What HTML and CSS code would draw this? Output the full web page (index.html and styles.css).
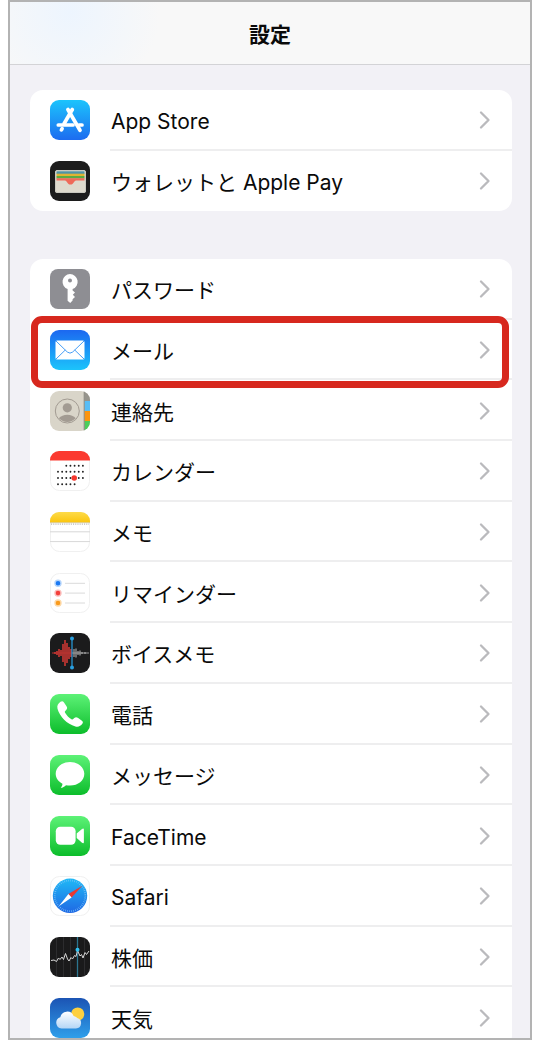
FILE: index.html
```html
<!DOCTYPE html>
<html lang="ja">

<head>
    <meta charset="UTF-8">
    <meta name="viewport" content="width=device-width, initial-scale=1.0">
    <title>設定</title>
    <link rel="stylesheet" href="styles.css">
</head>

<body>
    <!-- Shared gradients and the chevron -->
    <svg class="defs" width="0" height="0" aria-hidden="true">
        <defs>
            <linearGradient id="g-store" x2="0" y2="1">
                <stop offset="0" stop-color="#1cc4fc" />
                <stop offset="1" stop-color="#1d6cf0" />
            </linearGradient>
            <linearGradient id="g-mail" x2="0" y2="1">
                <stop offset="0" stop-color="#1c68f0" />
                <stop offset="1" stop-color="#1cc4fb" />
            </linearGradient>
            <linearGradient id="g-green" x2="0" y2="1">
                <stop offset="0" stop-color="#5df277" />
                <stop offset="1" stop-color="#0cbd2b" />
            </linearGradient>
            <linearGradient id="g-notes" x2="0" y2="1">
                <stop offset="0" stop-color="#fddb4a" />
                <stop offset="1" stop-color="#fbc50d" />
            </linearGradient>
            <linearGradient id="g-safari" x2="0" y2="1">
                <stop offset="0" stop-color="#1fb9f6" />
                <stop offset="1" stop-color="#1f68e4" />
            </linearGradient>
            <linearGradient id="g-weather" x2="0" y2="1">
                <stop offset="0" stop-color="#1b54b4" />
                <stop offset="1" stop-color="#2f9fea" />
            </linearGradient>
            <linearGradient id="g-cloud" x2="0" y2="1">
                <stop offset="0" stop-color="#ffffff" />
                <stop offset="1" stop-color="#b5d6f6" />
            </linearGradient>
            <clipPath id="tile">
                <rect width="40" height="40" rx="9" />
            </clipPath>
            <symbol id="chevron" viewBox="0 0 12 20">
                <path d="M2 2.500 L9.500 10 L2 17.500" fill="none" stroke="#bababd" stroke-width="2.300" stroke-linecap="round" stroke-linejoin="round" />
            </symbol>
        </defs>
    </svg>

    <div class="phone">
        <header class="navbar">
            <h1>設定</h1>
        </header>

        <main class="settings">
            <ul class="group">
                <li>
                    <a class="row" href="#app-store">
                        <svg class="icon" viewBox="0 0 40 40">
                            <rect width="40" height="40" rx="9" fill="url(#g-store)" />
                            <g fill="none" stroke="#fff" stroke-width="3.700" stroke-linecap="round">
                                <path d="M22.300 9.500 L14.200 23.500" />
                                <path d="M12.100 28.700 L11.400 29.900" />
                                <path d="M17.900 9.500 L30 30.300" />
                                <path d="M8.300 25 H23 M29 25 H32" />
                            </g>
                        </svg>
                        <span class="row-body">App Store<svg class="chevron"><use href="#chevron" /></svg></span>
                    </a>
                </li>
                <li>
                    <a class="row" href="#wallet">
                        <svg class="icon" viewBox="0 0 40 40">
                            <rect width="40" height="40" rx="9" fill="#1c1c1c" />
                            <rect x="5" y="9" width="31" height="23" rx="2.500" fill="#dedacd" />
                            <path d="M6.500 10.300 H34.500 V13 H6.500z" fill="#4d94a6" />
                            <path d="M6.500 12.700 H34.500 V15.200 H6.500z" fill="#e0b332" />
                            <path d="M6.500 15 H34.500 V17.500 H6.500z" fill="#5bab42" />
                            <path d="M6.500 17.300 H34.500 V19.500 H26 C24 19.500 23.800 23.600 20.500 23.600 S17 19.500 15 19.500 H6.500z" fill="#ef6a59" />
                            <rect x="5.500" y="9.500" width="30" height="22" rx="2" fill="none" stroke="#c9c8bf" />
                        </svg>
                        <span class="row-body">ウォレットと Apple Pay<svg class="chevron"><use href="#chevron" /></svg></span>
                    </a>
                </li>
            </ul>

            <ul class="group group-apps">
                <li>
                    <a class="row" href="#passwords">
                        <svg class="icon" viewBox="0 0 40 40">
                            <rect width="40" height="40" rx="8" fill="#8e8e93" />
                            <path fill="#fff" fill-rule="evenodd" d="M20 5 a7.800 7.800 0 0 1 2.600 15.100 V21.500 L25 23.600 L22.800 25.800 L25 28 L22.600 30.200 V31.500 L20.200 34 L17.600 31.700 V20.100 A7.800 7.800 0 0 1 20 5z M20 9.400 a2 2 0 1 0 0 4 a2 2 0 1 0 0 -4z" />
                        </svg>
                        <span class="row-body">パスワード<svg class="chevron"><use href="#chevron" /></svg></span>
                    </a>
                </li>
                <li class="highlighted">
                    <a class="row" href="#mail">
                        <svg class="icon" viewBox="0 0 40 40">
                            <rect width="40" height="40" rx="9" fill="url(#g-mail)" />
                            <rect x="5.500" y="10.500" width="29" height="19" rx="1.500" fill="#fff" />
                            <g fill="none" stroke="#3293f5" stroke-width="0.900">
                                <path d="M6 11 L17.300 22 Q20 24.300 22.700 22 L34 11" />
                                <path d="M6 29 L15.300 20 M34 29 L24.700 20" />
                            </g>
                        </svg>
                        <span class="row-body">メール<svg class="chevron"><use href="#chevron" /></svg></span>
                    </a>
                </li>
                <li>
                    <a class="row" href="#contacts">
                        <svg class="icon" viewBox="0 0 40 40">
                            <g clip-path="url(#tile)">
                                <rect width="40" height="40" fill="#d9d5c9" />
                                <rect x="34.500" width="6" height="10" fill="#96948c" />
                                <rect x="34.500" y="10" width="6" height="10" fill="#58bdf5" />
                                <rect x="34.500" y="20" width="6" height="10" fill="#fb950f" />
                                <rect x="34.500" y="30" width="6" height="10" fill="#4ccd5c" />
                                <path d="M34.200 0 V40" stroke="#77756e" stroke-width="0.800" />
                            </g>
                            <circle cx="17.300" cy="20" r="12" fill="none" stroke="#a29b92" />
                            <circle cx="17.300" cy="16.800" r="4.600" fill="#a29b92" />
                            <path d="M8.800 27.300 Q12 23.700 17.300 23.700 T25.800 27.300 Q22 31 17.300 31 T8.800 27.300z" fill="#a29b92" />
                        </svg>
                        <span class="row-body">連絡先<svg class="chevron"><use href="#chevron" /></svg></span>
                    </a>
                </li>
                <li>
                    <a class="row" href="#calendar">
                        <svg class="icon" viewBox="0 0 40 40">
                            <rect x="0.500" y="0.500" width="39" height="39" rx="9" fill="#fff" stroke="#f0f0f0" />
                            <path d="M0 9.500 V9 A9 9 0 0 1 9 0 H31 A9 9 0 0 1 40 9 V9.500z" fill="#fb3a30" />
                            <g stroke="#222" stroke-width="1.900" stroke-linecap="round" stroke-dasharray="0 4.150">
                                <path d="M16.300 14.700 H33" />
                                <path d="M8 20.800 H33" />
                                <path d="M8 27 H33" />
                                <path d="M8 33.200 H25" />
                            </g>
                            <circle cx="24.200" cy="27" r="2.800" fill="#f5362c" />
                        </svg>
                        <span class="row-body">カレンダー<svg class="chevron"><use href="#chevron" /></svg></span>
                    </a>
                </li>
                <li>
                    <a class="row" href="#notes">
                        <svg class="icon" viewBox="0 0 40 40">
                            <rect x="0.500" y="0.500" width="39" height="39" rx="9" fill="#fff" stroke="#f0f0f0" />
                            <path d="M0 10.500 V9 A9 9 0 0 1 9 0 H31 A9 9 0 0 1 40 9 V10.500z" fill="url(#g-notes)" />
                            <path d="M0 10.700 H40" stroke="#c9b884" stroke-width="0.600" />
                            <path d="M1 12.200 H39" stroke="#b8b8b8" stroke-width="1.200" stroke-dasharray="1.100 1.100" />
                            <path d="M0 19.800 H40 M0 29.600 H40" stroke="#d8d8d8" />
                        </svg>
                        <span class="row-body">メモ<svg class="chevron"><use href="#chevron" /></svg></span>
                    </a>
                </li>
                <li>
                    <a class="row" href="#reminders">
                        <svg class="icon" viewBox="0 0 40 40">
                            <rect x="0.500" y="0.500" width="39" height="39" rx="9" fill="#fff" stroke="#f0f0f0" />
                            <circle cx="8" cy="10.300" r="3" fill="#1a78f2" stroke="#b4d4fb" stroke-width="1.400" />
                            <circle cx="8" cy="20.100" r="3" fill="#f3403a" stroke="#fbbcba" stroke-width="1.400" />
                            <circle cx="8" cy="30" r="3" fill="#f99a1c" stroke="#fdd9a8" stroke-width="1.400" />
                            <path d="M15 10.300 H35 M15 20.100 H35 M15 30 H35" stroke="#dadada" />
                        </svg>
                        <span class="row-body">リマインダー<svg class="chevron"><use href="#chevron" /></svg></span>
                    </a>
                </li>
                <li>
                    <a class="row" href="#voice-memos">
                        <svg class="icon" viewBox="0 0 40 40">
                            <rect width="40" height="40" rx="9" fill="#1b1b1c" />
                            <path d="M2 20 H22" stroke="#b5302e" />
                            <path d="M5 19 V21 M7 18 V22 M9 16 V24 M11 17 V23 M13 11 V29 M15 7 V33 M17 10 V30 M19 14 V26 M21 16 V24" stroke="#c03632" stroke-width="1.700" />
                            <path d="M22 20 H39" stroke="#999" />
                            <path d="M24 16 V24 M26 15.500 V24.500 M28 18 V22 M30 17.500 V22.500 M32 19 V21 M35 19 V21" stroke="#a5a5a5" stroke-width="1.200" />
                            <path d="M22 6 V34" stroke="#299fdf" stroke-width="1.200" />
                            <circle cx="22" cy="5.500" r="2" fill="#299fdf" />
                            <circle cx="22" cy="34.500" r="2" fill="#299fdf" />
                        </svg>
                        <span class="row-body">ボイスメモ<svg class="chevron"><use href="#chevron" /></svg></span>
                    </a>
                </li>
                <li>
                    <a class="row" href="#phone">
                        <svg class="icon" viewBox="0 0 40 40">
                            <rect width="40" height="40" rx="9" fill="url(#g-green)" />
                            <path fill="#fff" d="M10.500 7.800 C12 6.700 13 7.100 14 8.500 L16.500 12.200 C17.500 13.800 17.300 14.700 16.200 15.900 L15.200 17 C14.700 17.600 14.800 18.100 15.100 18.700 C16.500 21.200 19 23.700 21.500 25.200 C22.200 25.600 22.700 25.600 23.200 25.100 L24.300 24.100 C25.500 23 26.400 22.900 27.800 23.800 L31.600 26.400 C33 27.400 33.300 28.400 32.300 29.800 C30.700 32.100 28.400 33.200 25.400 32.400 C17 30 9.800 22.600 7.500 14.700 C6.800 11.800 8 9.500 10.500 7.800z" />
                        </svg>
                        <span class="row-body">電話<svg class="chevron"><use href="#chevron" /></svg></span>
                    </a>
                </li>
                <li>
                    <a class="row" href="#messages">
                        <svg class="icon" viewBox="0 0 40 40">
                            <rect width="40" height="40" rx="9" fill="url(#g-green)" />
                            <path fill="#fff" d="M20 7 C28.200 7 34.300 12.200 34.300 18.800 S28.200 30.600 20 30.600 C18.600 30.600 17.300 30.400 16 30.200 C14.500 31.800 12.700 32.700 10.700 32.800 C12 31.400 12.500 30 12.400 28.700 C8.300 26.700 5.700 23 5.700 18.800 C5.700 12.200 11.800 7 20 7z" />
                        </svg>
                        <span class="row-body">メッセージ<svg class="chevron"><use href="#chevron" /></svg></span>
                    </a>
                </li>
                <li>
                    <a class="row" href="#facetime">
                        <svg class="icon" viewBox="0 0 40 40">
                            <rect width="40" height="40" rx="9" fill="url(#g-green)" />
                            <rect x="5.800" y="10.800" width="19.800" height="18" rx="4.500" fill="#fff" />
                            <path fill="#fff" d="M26.700 17.600 L32 12.900 Q33.900 11.600 33.900 13.700 V25.900 Q33.900 28 32 26.700 L26.700 22z" />
                        </svg>
                        <span class="row-body">FaceTime<svg class="chevron"><use href="#chevron" /></svg></span>
                    </a>
                </li>
                <li>
                    <a class="row" href="#safari">
                        <svg class="icon" viewBox="0 0 40 40">
                            <rect x="0.500" y="0.500" width="39" height="39" rx="9" fill="#fff" stroke="#f0f0f0" />
                            <circle cx="20" cy="19.800" r="17.200" fill="url(#g-safari)" />
                            <circle cx="20" cy="19.800" r="15.300" fill="none" stroke="#7fc4f8" stroke-width="1.800" stroke-dasharray="0.600 1.400" />
                            <path d="M32.300 9.800 L18.400 18 L21.600 21.600z" fill="#e8382f" />
                            <path d="M8.800 30.300 L18.400 18 L21.600 21.600z" fill="#fff" />
                        </svg>
                        <span class="row-body">Safari<svg class="chevron"><use href="#chevron" /></svg></span>
                    </a>
                </li>
                <li>
                    <a class="row" href="#stocks">
                        <svg class="icon" viewBox="0 0 40 40">
                            <rect width="40" height="40" rx="9" fill="#1a1a1b" />
                            <path d="M6.500 1 V39 M13.500 0 V40 M20.500 0 V40 M34.500 1 V39" stroke="#2c2c2e" />
                            <path d="M27.500 0 V40" stroke="#2c7590" stroke-width="1.300" />
                            <path d="M1 23.500 L4 23 L6.500 24.500 L8.500 21 L10 22.500 L12 20 L13.500 22.500 L15.500 16.500 L17.500 22 L19 24 L21 20.500 L22.500 22 L24.500 18.500 L26 19.500 L27.500 13.500 L30 19 L31.500 17.500 L33 21 L35 15.500 L36.500 17.500 L39 14" fill="none" stroke="#d8d8d8" />
                            <circle cx="27.500" cy="12.800" r="2" fill="#2fc0f0" />
                        </svg>
                        <span class="row-body">株価<svg class="chevron"><use href="#chevron" /></svg></span>
                    </a>
                </li>
                <li>
                    <a class="row" href="#weather">
                        <svg class="icon" viewBox="0 0 40 40">
                            <rect width="40" height="40" rx="9" fill="url(#g-weather)" />
                            <circle cx="27.700" cy="16" r="6.600" fill="#fdd03f" />
                            <path d="M11.500 30.500 A5.800 5.800 0 0 1 10.300 19.200 A7 7 0 0 1 23.600 17.900 A5.500 5.500 0 0 1 27.200 20.100 A5.300 5.300 0 0 1 26 30.500z" fill="url(#g-cloud)" />
                        </svg>
                        <span class="row-body">天気<svg class="chevron"><use href="#chevron" /></svg></span>
                    </a>
                </li>
            </ul>
        </main>
    </div>
</body>

</html>
```
FILE: styles.css
```css
body {
    margin: 0;
    padding: 0 8px;
    background: #fff;
    color: #0a0a0a;
    font-family: Inter, "Noto Sans CJK JP", sans-serif;
    font-size: 21px;
    line-height: 28px;
}

.defs {
    position: absolute;
}

/* Phone screen: the list runs on below the bottom edge */
.phone {
    height: 100vh;
    box-sizing: border-box;
    overflow: hidden;
    border: 2px solid #b3b3b3;
    background: #f2f1f6;
}

.navbar {
    padding: 19px 0 15px;
    border-bottom: 1px solid #d3d3d6;
    background: radial-gradient(circle at 60px 10px, #edf5fe, #f8f8f8 90px);
}

h1 {
    margin: 0;
    font-size: 21px;
    line-height: 28px;
    font-weight: 700;
    text-align: center;
}

.settings {
    padding: 25px 18px 0 20px;
}

.group {
    display: grid;
    grid-auto-rows: 1fr;
    min-height: 121px;
    margin: 0 0 48px;
    padding: 0;
    list-style: none;
    background: #fff;
    border-radius: 13px;
}

.group-apps {
    min-height: 789px;
}

.row {
    display: flex;
    align-items: center;
    gap: 20px;
    height: 100%;
    padding-left: 20px;
    color: inherit;
    text-decoration: none;
}

.icon {
    flex: none;
    width: 40px;
    height: 40px;
}

.row-body {
    display: flex;
    flex: 1;
    align-items: center;
    justify-content: space-between;
    align-self: stretch;
    padding: 4px 21px 0 1px;
    box-shadow: inset 0 -2px #eeeeef;
}

.group li:last-child .row-body {
    box-shadow: none;
}

.chevron {
    width: 12px;
    height: 20px;
    margin-bottom: 4px;
}

/* Red frame around the row to tap */
.highlighted {
    position: relative;
}

.highlighted::after {
    content: "";
    position: absolute;
    inset: -4px 3px -8px 1px;
    border: 7px solid #d7281e;
    border-radius: 11px;
    pointer-events: none;
}
```
